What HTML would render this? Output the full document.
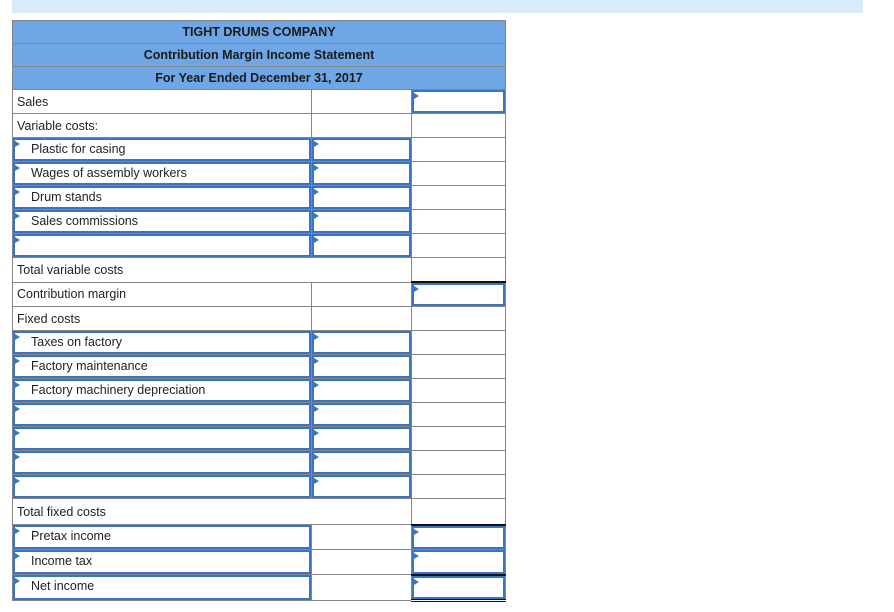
<!DOCTYPE html>
<html><head><style>
body{margin:0;width:894px;height:612px;background:#fff;font-family:"Liberation Sans",Arial,sans-serif;font-size:12.5px;color:#222;position:relative;overflow:hidden}
.top{position:absolute;left:12px;top:0;width:851px;height:13px;background:#d9ebf9}
table{position:absolute;left:12px;top:20px;border-collapse:collapse;table-layout:fixed}
td{border:1px solid #858585;padding:0;height:23px;position:relative;vertical-align:middle}
.h td{background:#6fa6e6;text-align:center;font-weight:bold;height:22px;color:#1a1a1a}
.l{padding-left:4px}
.i{position:absolute;left:0;top:0;right:0;bottom:0;border:2px solid #3a74c2;box-sizing:border-box;padding-left:16px;line-height:19px}
.i:before{content:"";position:absolute;left:0;top:1px;border-left:5px solid #3a74c2;border-top:3px solid transparent;border-bottom:3px solid transparent}
</style></head><body>
<div class="top"></div>
<table>
<colgroup><col style="width:299px"><col style="width:100px"><col style="width:94px"></colgroup>
<tr class="h"><td colspan="3">TIGHT DRUMS COMPANY</td></tr>
<tr class="h"><td colspan="3">Contribution Margin Income Statement</td></tr>
<tr class="h"><td colspan="3">For Year Ended December 31, 2017</td></tr>
<tr><td class="l">Sales</td><td></td><td><div class="i"></div></td></tr>
<tr><td class="l">Variable costs:</td><td></td><td></td></tr>
<tr><td><div class="i">Plastic for casing</div></td><td><div class="i"></div></td><td></td></tr>
<tr><td><div class="i">Wages of assembly workers</div></td><td><div class="i"></div></td><td></td></tr>
<tr><td><div class="i">Drum stands</div></td><td><div class="i"></div></td><td></td></tr>
<tr><td><div class="i">Sales commissions</div></td><td><div class="i"></div></td><td></td></tr>
<tr><td><div class="i"></div></td><td><div class="i"></div></td><td></td></tr>
<tr><td class="l" colspan="2">Total variable costs</td><td></td></tr>
<tr><td class="l">Contribution margin</td><td></td><td style="border-top:2px solid #111"><div class="i"></div></td></tr>
<tr><td class="l">Fixed costs</td><td></td><td></td></tr>
<tr><td><div class="i">Taxes on factory</div></td><td><div class="i"></div></td><td></td></tr>
<tr><td><div class="i">Factory maintenance</div></td><td><div class="i"></div></td><td></td></tr>
<tr><td><div class="i">Factory machinery depreciation</div></td><td><div class="i"></div></td><td></td></tr>
<tr><td><div class="i"></div></td><td><div class="i"></div></td><td></td></tr>
<tr><td><div class="i"></div></td><td><div class="i"></div></td><td></td></tr>
<tr><td><div class="i"></div></td><td><div class="i"></div></td><td></td></tr>
<tr><td><div class="i"></div></td><td><div class="i"></div></td><td></td></tr>
<tr><td class="l" colspan="2" style="height:25px">Total fixed costs</td><td></td></tr>
<tr><td style="height:24px"><div class="i">Pretax income</div></td><td></td><td style="border-top:2px solid #111"><div class="i"></div></td></tr>
<tr><td style="height:24px"><div class="i">Income tax</div></td><td></td><td><div class="i"></div></td></tr>
<tr><td style="height:25px"><div class="i">Net income</div></td><td></td><td style="border-top:2px solid #111;border-bottom:3px double #111"><div class="i"></div></td></tr>
</table>
</body></html>
